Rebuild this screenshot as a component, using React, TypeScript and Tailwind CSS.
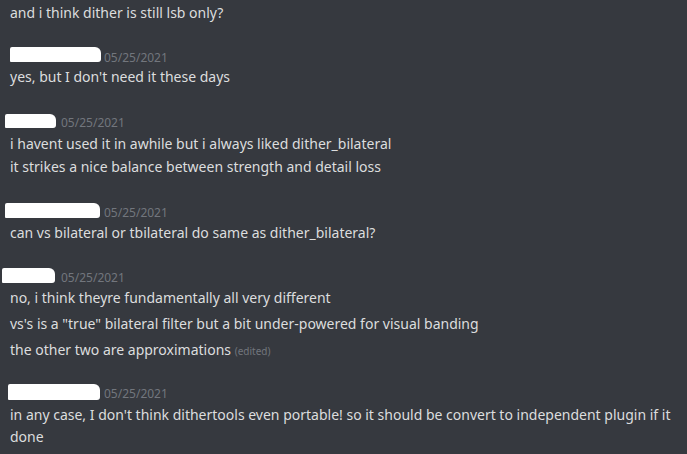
import React from "react";

const Blob = ({ left, width, height, top }: { left: number; width: number; height: number; top: number }) => (
  <div
    className="bg-white shrink-0"
    style={{ marginLeft: left, width, height, marginTop: top, borderRadius: "2px 6px 3px 1px" }}
  />
);

function Header({
  left,
  width,
  height,
  top,
  gap,
  dy = 2,
}: {
  left: number;
  width: number;
  height: number;
  top: number;
  gap: number;
  dy?: number;
}) {
  return (
    <div className="flex h-[22px] items-start">
      <Blob left={left} width={width} height={height} top={top} />
      <span className="text-[12px] leading-[22px] text-[#72767d]" style={{ marginLeft: gap, marginTop: dy }}>
        05/25/2021
      </span>
    </div>
  );
}

export default function App() {
  return (
    <div
      className="w-[687px] h-[454px] overflow-hidden bg-[#36393f] text-[#dcddde] text-[14px] leading-[22px]"
      style={{ fontFamily: '"Noto Sans", "Open Sans", sans-serif' }}
    >
      <div className="pl-[10px] pt-[2px]">and i think dither is still lsb only?</div>

      {/* message 1 */}
      <div className="mt-[20px]">
        <Header left={10} width={91} height={15} top={3} gap={3} dy={3} />
        <div className="pl-[10px]">yes, but I don't need it these days</div>
      </div>

      {/* message 2 */}
      <div className="mt-[22px]">
        <Header left={5} width={51} height={14} top={4} gap={5} />
        <div className="pl-[10px] mt-[1px]">i havent used it in awhile but i always liked dither_bilateral</div>
        <div className="pl-[10px] mt-[1px]">it strikes a nice balance between strength and detail loss</div>
      </div>

      {/* message 3 */}
      <div className="mt-[22px]">
        <Header left={5} width={95} height={15} top={3} gap={4} />
        <div className="pl-[10px]">can vs bilateral or tbilateral do same as dither_bilateral?</div>
      </div>

      {/* message 4 */}
      <div className="mt-[20px]">
        <Header left={2} width={53} height={15} top={4} gap={6} dy={3} />
        <div className="pl-[10px] mt-[1px]">no, i think theyre fundamentally all very different</div>
        <div className="pl-[10px] mt-[4px]">vs's is a "true" bilateral filter but a bit under-powered for visual banding</div>
        <div className="pl-[10px] mt-[4px]">
          the other two are approximations{" "}
          <span className="text-[10px] text-[#72767d]">(edited)</span>
        </div>
      </div>

      {/* message 5 */}
      <div className="mt-[19px]">
        <Header left={8} width={92} height={16} top={3} gap={4} />
        <div className="pl-[10px] mt-[1px] whitespace-nowrap">
          in any case, I don't think dithertools even portable! so it should be convert to independent plugin if it
          <br />
          done
        </div>
      </div>
    </div>
  );
}
